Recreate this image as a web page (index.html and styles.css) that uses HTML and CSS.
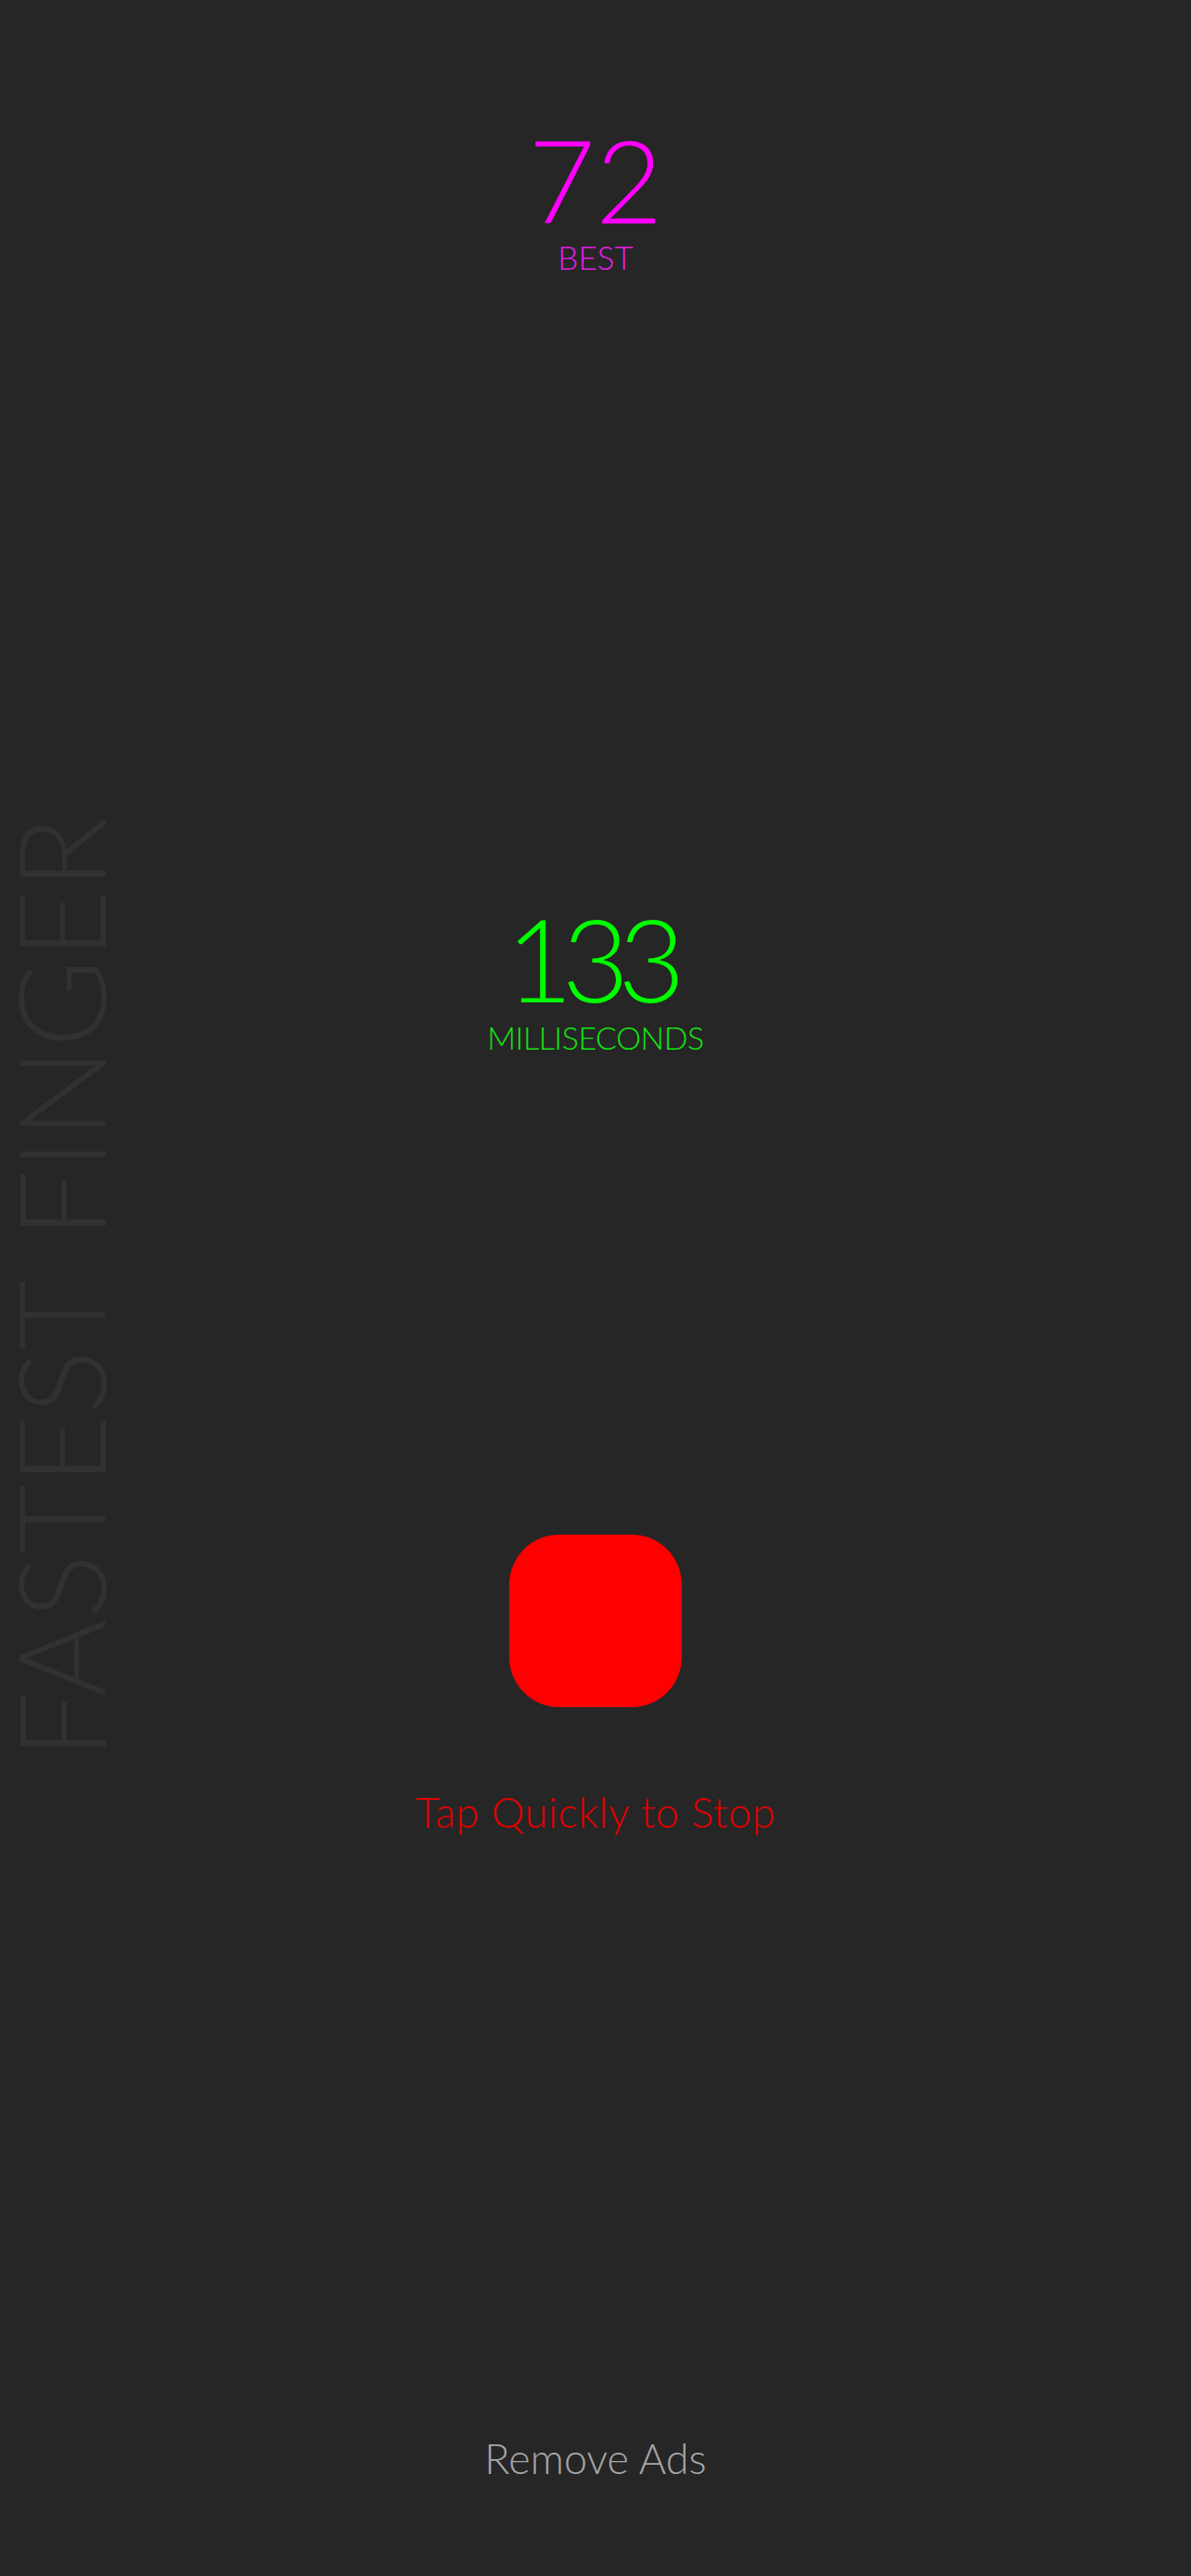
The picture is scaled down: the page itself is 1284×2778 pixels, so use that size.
FILE: index.html
```html
<!DOCTYPE html>
<html lang="en">
<head>
<meta charset="utf-8">
<title>Fastest Finger</title>
<link rel="stylesheet" href="styles.css">
</head>
<body>
<div class="screen">
  <div class="side">
    <div class="side-title">FASTEST FINGER</div>
  </div>
  <div class="center">
    <div class="best-value">72</div>
    <div class="best-label">BEST</div>
    <div class="time-value">133</div>
    <div class="time-label">MILLISECONDS</div>
    <div class="stop-button"></div>
    <div class="hint">Tap Quickly to Stop</div>
    <div class="remove-ads">Remove Ads</div>
  </div>
  <div class="spacer"></div>
</div>
</body>
</html>
```
FILE: styles.css
```css
html, body {
  margin: 0;
  padding: 0;
  background: #262626;
}
body {
  font-family: "Lato", "Noto Sans", sans-serif;
  font-weight: 300;
}
.screen {
  display: grid;
  grid-template-columns: 140px 1fr 140px;
  height: 2778px;
}
.side {
  display: flex;
  align-items: center;
  justify-content: flex-start;
}
.side-title {
  writing-mode: vertical-rl;
  transform: rotate(180deg);
  font-size: 130px;
  line-height: 1.2;
  margin-left: -14px;
  word-spacing: 14px;
  color: #313131;
  white-space: nowrap;
}
.center {
  display: flex;
  flex-direction: column;
  align-items: center;
}
.best-value {
  margin-top: 137px;
  font-size: 125px;
  line-height: 112px;
  color: #ff00ff;
}
.best-label {
  margin-top: 13px;
  font-size: 35px;
  line-height: 30px;
  color: #e61ee6;
}
.time-value {
  margin-top: 685px;
  padding-right: 12px;
  font-size: 125px;
  line-height: 112px;
  letter-spacing: -12px;
  color: #00ff00;
}
.time-label {
  margin-top: 15px;
  font-size: 34px;
  line-height: 30px;
  letter-spacing: -0.5px;
  color: #12e612;
}
.stop-button {
  margin-top: 521px;
  width: 186px;
  height: 186px;
  border-radius: 54px;
  background: #ff0000;
}
.hint {
  margin-top: 91px;
  font-size: 45px;
  line-height: 45px;
  letter-spacing: 0.6px;
  color: #e00000;
}
.remove-ads {
  margin-top: 652px;
  font-size: 45px;
  line-height: 45px;
  color: #a6a6a6;
}
```
